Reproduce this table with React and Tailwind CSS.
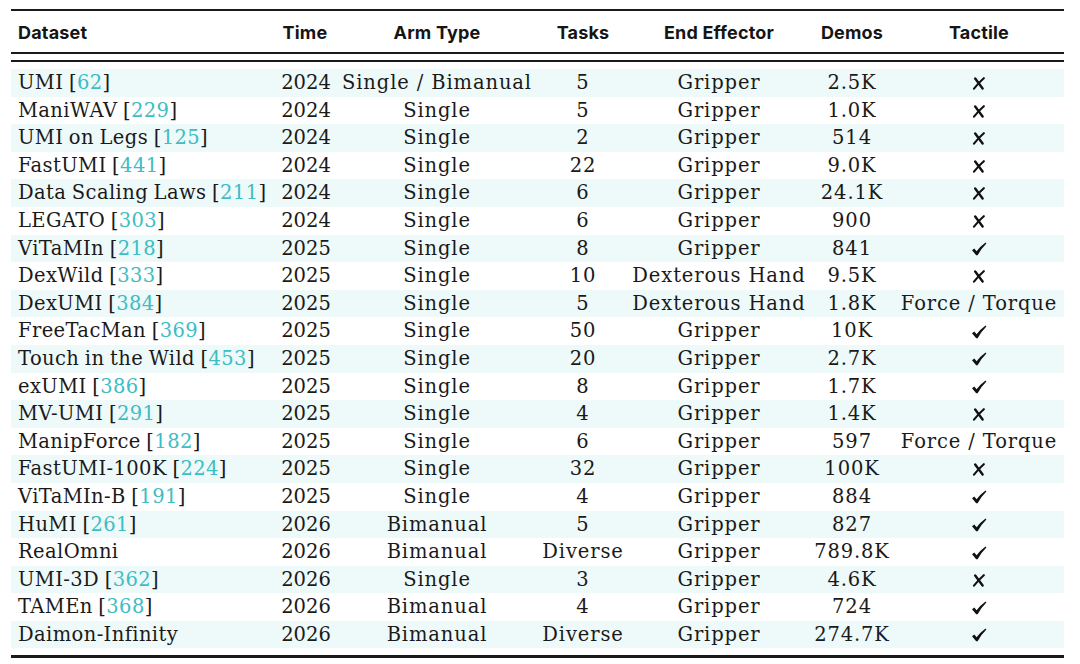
import React from 'react';

const rows = [
  ['UMI', '62', '2024', 'Single / Bimanual', '5', 'Gripper', '2.5K', 'x'],
  ['ManiWAV', '229', '2024', 'Single', '5', 'Gripper', '1.0K', 'x'],
  ['UMI on Legs', '125', '2024', 'Single', '2', 'Gripper', '514', 'x'],
  ['FastUMI', '441', '2024', 'Single', '22', 'Gripper', '9.0K', 'x'],
  ['Data Scaling Laws', '211', '2024', 'Single', '6', 'Gripper', '24.1K', 'x'],
  ['LEGATO', '303', '2024', 'Single', '6', 'Gripper', '900', 'x'],
  ['ViTaMIn', '218', '2025', 'Single', '8', 'Gripper', '841', 'v'],
  ['DexWild', '333', '2025', 'Single', '10', 'Dexterous Hand', '9.5K', 'x'],
  ['DexUMI', '384', '2025', 'Single', '5', 'Dexterous Hand', '1.8K', 'Force / Torque'],
  ['FreeTacMan', '369', '2025', 'Single', '50', 'Gripper', '10K', 'v'],
  ['Touch in the Wild', '453', '2025', 'Single', '20', 'Gripper', '2.7K', 'v'],
  ['exUMI', '386', '2025', 'Single', '8', 'Gripper', '1.7K', 'v'],
  ['MV-UMI', '291', '2025', 'Single', '4', 'Gripper', '1.4K', 'x'],
  ['ManipForce', '182', '2025', 'Single', '6', 'Gripper', '597', 'Force / Torque'],
  ['FastUMI-100K', '224', '2025', 'Single', '32', 'Gripper', '100K', 'x'],
  ['ViTaMIn-B', '191', '2025', 'Single', '4', 'Gripper', '884', 'v'],
  ['HuMI', '261', '2026', 'Bimanual', '5', 'Gripper', '827', 'v'],
  ['RealOmni', null, '2026', 'Bimanual', 'Diverse', 'Gripper', '789.8K', 'v'],
  ['UMI-3D', '362', '2026', 'Single', '3', 'Gripper', '4.6K', 'x'],
  ['TAMEn', '368', '2026', 'Bimanual', '4', 'Gripper', '724', 'v'],
  ['Daimon-Infinity', null, '2026', 'Bimanual', 'Diverse', 'Gripper', '274.7K', 'v'],
];

const cols = 'grid grid-cols-[259px_70px_194px_98px_174px_92px_162px]';

function Tactile({ value }) {
  if (value === 'v')
    return (
      <svg width="16" height="14" viewBox="0 0 16 14" className="inline-block align-middle">
        <path d="M1 8.2 L3.3 6.6 L5.6 9.3 Q9.5 4 14.6 0.4 L15.4 1.4 Q10.4 6.2 6.6 13.2 L5.2 13.2 Z" fill="#111" />
      </svg>
    );
  if (value === 'x')
    return (
      <svg width="14" height="13" viewBox="0 0 14 13" className="inline-block align-middle">
        <path d="M3.2 1.5 Q6.5 6 10.6 11.5" stroke="#111" strokeWidth="2.4" strokeLinecap="round" fill="none" />
        <path d="M11.8 1.2 Q6.5 5.8 2 11.6" stroke="#111" strokeWidth="2.1" strokeLinecap="round" fill="none" />
      </svg>
    );
  return <span>{value}</span>;
}

export default function App() {
  return (
    <div className="w-[1080px] h-[664px] bg-white pt-[9px] pl-[11px] text-[#151515]">
      <div className="w-[1053px]">
        <div className="h-[2px] bg-[#1a1a1a]" />
        <div className={`${cols} h-[41px] pt-[2px] items-center font-['Inter',sans-serif] font-bold text-[18px] tracking-[0.01em]`}>
          <div className="pl-[7px]">Dataset</div>
          <div className="text-center">Time</div>
          <div className="text-center">Arm Type</div>
          <div className="text-center">Tasks</div>
          <div className="text-center">End Effector</div>
          <div className="text-center">Demos</div>
          <div className="text-center">Tactile</div>
        </div>
        <div className="h-[1.5px] bg-[#1a1a1a]" />
        <div className="h-[6.5px]" />
        <div className="h-[1.5px] bg-[#1a1a1a]" />
        <div className="h-[7.5px]" />
        <div className="font-['DejaVu_Serif',serif] text-[19.5px] tracking-[0.045em] leading-none text-[#1a1a1a]">
          {rows.map((r, i) => (
            <div key={i} className={`${cols} h-[27.6px] items-center ${i % 2 === 0 ? 'bg-[#eef9f9]' : ''}`}>
              <div className="pl-[7px] whitespace-nowrap tracking-[0.02em] [word-spacing:-1px]">
                {r[0]}
                {r[1] && (
                  <>
                    {' '}[<span className="text-[#3dbdc4]">{r[1]}</span>]
                  </>
                )}
              </div>
              <div className="text-center tracking-normal pl-[2px]">{r[2]}</div>
              <div className="text-center whitespace-nowrap">{r[3]}</div>
              <div className="text-center">{r[4]}</div>
              <div className="text-center whitespace-nowrap">{r[5]}</div>
              <div className="text-center">{r[6]}</div>
              <div className="text-center whitespace-nowrap"><Tactile value={r[7]} /></div>
            </div>
          ))}
        </div>
        <div className="h-[7px]" />
        <div className="h-[2.5px] bg-[#1a1a1a]" />
      </div>
    </div>
  );
}
